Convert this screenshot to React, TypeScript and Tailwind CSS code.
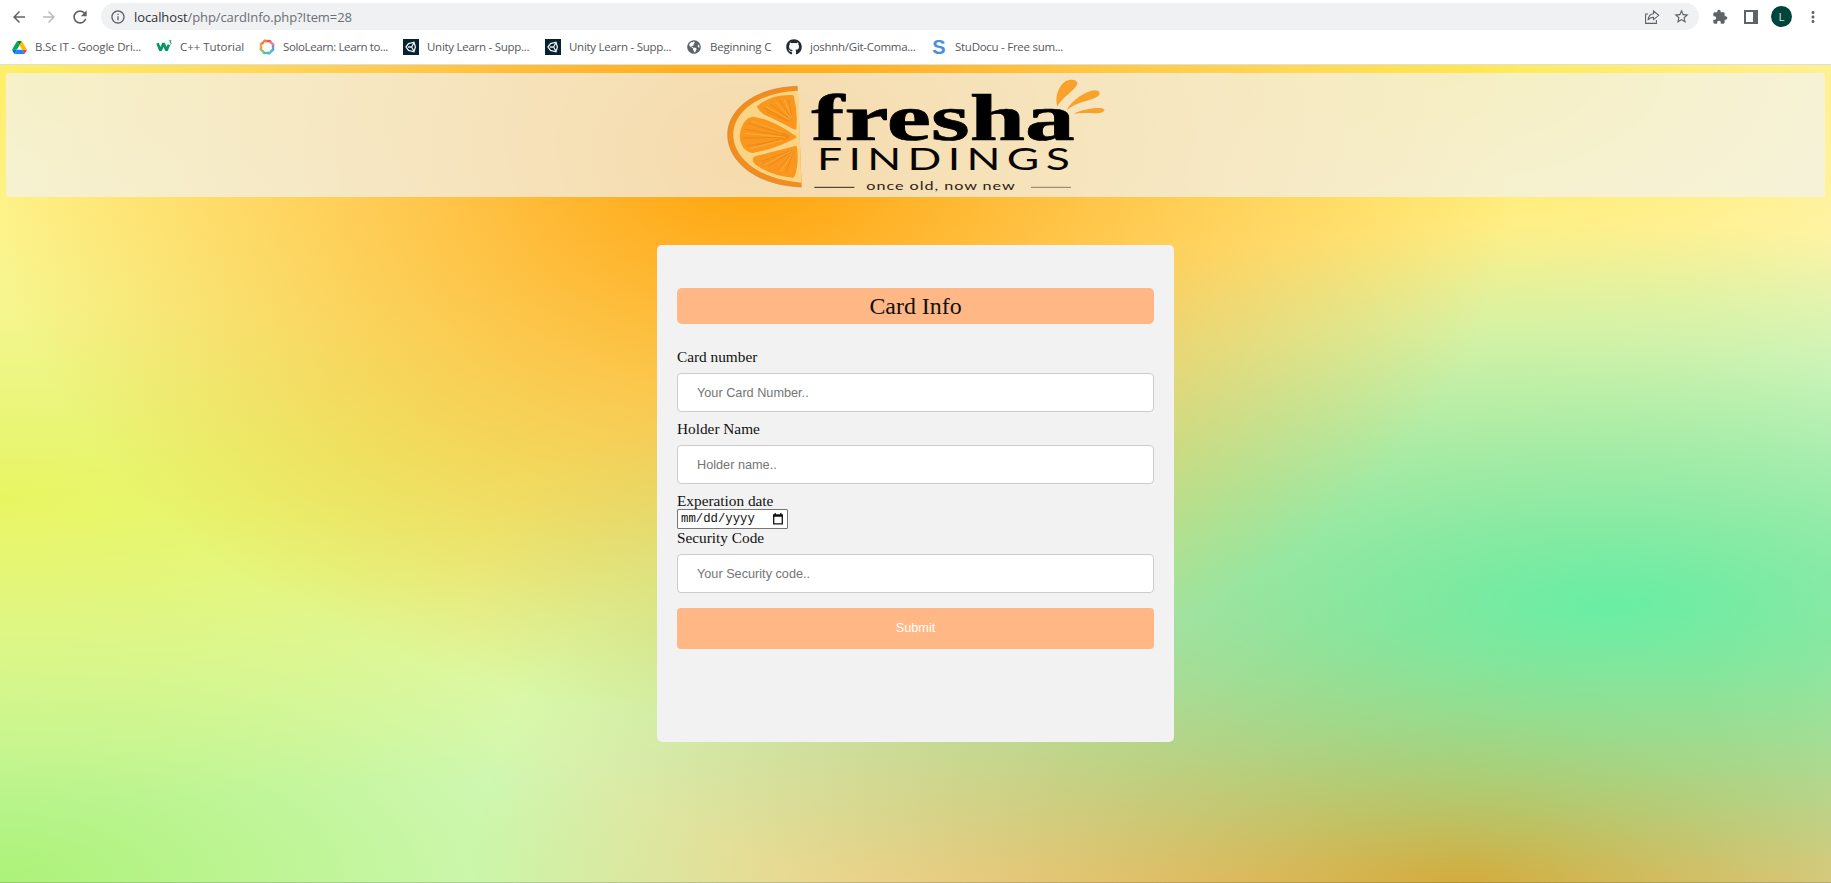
import React from "react";
import { FaGithub, FaGlobeAmericas } from "react-icons/fa";
import { MdArrowBack, MdArrowForward, MdRefresh, MdInfoOutline, MdStarBorder, MdExtension, MdMoreVert } from "react-icons/md";

const mesh = [
  "radial-gradient(42% 69% at 41% 11%, #ffa207 0px, transparent 100%)",
  "radial-gradient(at 88% 66%, #68eea4 0px, transparent 50%)",
  "radial-gradient(at 80% 0%, #ffe957 0px, transparent 50%)",
  "radial-gradient(at 0% 53%, #e8f562 0px, transparent 50%)",
  "radial-gradient(at 80% 100%, #fa9418 0px, transparent 48%)",
  "radial-gradient(at 0% 100%, #acf278 0px, transparent 50%)",
  "radial-gradient(at 0% 0%, #fff068 0px, transparent 50%)",
].join(",");

function DriveIcon() {
  return (
    <svg viewBox="0 0 87.3 78" className="h-[13px] w-[15px]">
      <path d="M6.6 66.85l3.85 6.65c.8 1.4 1.95 2.5 3.3 3.3L27.5 53H0c0 1.55.4 3.1 1.2 4.5z" fill="#0066da" />
      <path d="M43.65 25L29.9 1.2c-1.35.8-2.5 1.9-3.3 3.3L1.2 48.5A9 9 0 000 53h27.5z" fill="#00ac47" />
      <path d="M73.55 76.8c1.35-.8 2.5-1.9 3.3-3.3l1.6-2.75 7.65-13.25c.8-1.4 1.2-2.95 1.2-4.5H59.8l5.85 11.5z" fill="#ea4335" />
      <path d="M43.65 25L57.4 1.2C56.05.4 54.5 0 52.9 0H34.4c-1.6 0-3.15.45-4.5 1.2z" fill="#00832d" />
      <path d="M59.8 53H27.5L13.75 76.8c1.35.8 2.9 1.2 4.5 1.2h50.8c1.6 0 3.15-.45 4.5-1.2z" fill="#2684fc" />
      <path d="M73.4 26.5l-12.7-22c-.8-1.4-1.95-2.5-3.3-3.3L43.65 25 59.8 53h27.45c0-1.55-.4-3.1-1.2-4.5z" fill="#ffba00" />
    </svg>
  );
}

function W3Icon() {
  return (
    <svg viewBox="0 0 16 16" className="h-4 w-4" fill="none" stroke="#059862">
      <path d="M1.500 4.2l3 7.2 3-7 3 7 2.400-5.600" strokeWidth="2.7" strokeLinejoin="bevel" />
      <path d="M12.9 1.8h2.3l-1.2 1.4c1.6.1 1.7 2-.2 2.1" strokeWidth="0.9" />
    </svg>
  );
}

function SoloIcon() {
  const colors = ["#ef5350", "#f57c8a", "#5c9ce6", "#4db6e2", "#4cc3a5", "#8cc56f", "#f5a04c", "#f0803c"];
  return (
    <svg viewBox="0 0 16 16" className="h-4 w-4" fill="none" strokeWidth="2.2">
      {colors.map((c, i) => (
        <path key={c} d="M6.200 2.300l4.600-.5 1.800 2.200" stroke={c} transform={`rotate(${i * 45} 8 8)`} />
      ))}
    </svg>
  );
}

function UnityIcon() {
  return (
    <svg viewBox="0 0 16 16" className="h-4 w-4">
      <rect width="16" height="16" fill="#06222e" />
      <path d="M3 8l2.5-3.4L11 3.2l1.4 4.8L11 12.8l-5.500-1.400zM5 8h3.600M8.600 8l2.200-4M8.600 8l2.200 4" fill="none" stroke="#e8eef0" strokeWidth="1.3" />
    </svg>
  );
}

function StuIcon() {
  return <span className="font-['Liberation_Sans'] text-[20px] leading-4 font-bold text-[#4a90d9]">S</span>;
}

const bookmarks = [
  { icon: <DriveIcon />, label: "B.Sc IT - Google Dri...", box: "w-[145px]", track: "tracking-[-0.18px]" },
  { icon: <W3Icon />, label: "C++ Tutorial", box: "w-[103px]", track: "tracking-[-0.05px]" },
  { icon: <SoloIcon />, label: "SoloLearn: Learn to...", box: "w-[144px]", track: "tracking-[-0.38px]" },
  { icon: <UnityIcon />, label: "Unity Learn - Supp...", box: "w-[142px]", track: "tracking-[-0.27px]" },
  { icon: <UnityIcon />, label: "Unity Learn - Supp...", box: "w-[141px]", track: "tracking-[-0.27px]" },
  { icon: <FaGlobeAmericas size={14} color="#5f6368" />, label: "Beginning C", box: "w-[100px]", track: "tracking-[-0.22px]" },
  { icon: <FaGithub size={16} color="#24292e" />, label: "joshnh/Git-Comma...", box: "w-[145px]", track: "tracking-[-0.27px]" },
  { icon: <StuIcon />, label: "StuDocu - Free sum...", box: "w-[140px]", track: "tracking-[-0.27px]" },
];

function BrowserBar() {
  return (
    <div className="h-[65px] border-b border-[#dcdfe3] bg-white text-[#5f6368]">
      <div className="flex h-[33px] items-center pr-[9px] pl-[10px]">
        <MdArrowBack size={18} />
        <MdArrowForward size={18} className="ml-[12px] text-[#b9bbbe]" />
        <MdRefresh size={20} className="ml-[12px]" />
        <div className="ml-[11px] flex h-[27px] flex-1 items-center rounded-full bg-[#f0f1f3] pr-[9px] pl-[9px]">
          <MdInfoOutline size={16} />
          <span className="ml-[8px] font-['Open_Sans',sans-serif] text-[13px] leading-4 tracking-[-0.1px] whitespace-nowrap text-[#6b6f73]">
            <span className="text-[#303235]">localhost</span>/php/cardInfo.php?Item=28
          </span>
          <svg viewBox="0 0 16 16" className="ml-auto h-4 w-4" fill="none" stroke="currentColor" strokeWidth="1.1">
            <path d="M4 5H1.600v9.400h10.800V11" />
            <path d="M9.500 2l5.200 4.300-5.200 4.300V8.200C7 8.200 5.300 9 4 11c.3-3.500 2.200-6 5.500-6.300z" />
          </svg>
          <MdStarBorder size={17} className="ml-[13px]" />
        </div>
        <MdExtension size={16} className="ml-[13px]" />
        <svg viewBox="0 0 14 14" className="ml-[16px] h-[14px] w-[14px]">
          <path d="M1 1h12v12H1z" fill="none" stroke="currentColor" strokeWidth="2" />
          <path d="M9 1h4v12H9z" fill="currentColor" />
        </svg>
        <span className="ml-[13px] flex h-[21px] w-[21px] items-center justify-center rounded-full bg-[#00453b] font-['Open_Sans',sans-serif] text-[11.500px] text-[#d6e6e2]">L</span>
        <MdMoreVert size={18} className="ml-[12px]" />
      </div>
      <div className="flex h-[28px] items-center pl-[11px]">
        {bookmarks.map((b, i) => (
          <div key={i} className={`flex shrink-0 items-center gap-[8px] ${b.box}`}>
            <span className="flex h-4 w-4 shrink-0 items-center justify-center">{b.icon}</span>
            <span className={`font-['Open_Sans',sans-serif] text-[11.500px] leading-4 whitespace-nowrap text-[#55595d] ${b.track}`}>{b.label}</span>
          </div>
        ))}
      </div>
    </div>
  );
}

function Logo() {
  return (
    <svg viewBox="2 27 1230 372" className="h-[124px] w-[410px]">
      <path d="M262 67C130 70 50 140 52 215c2 80 90 150 222 154z" fill="#f28c1c" />
      <path d="M262 67C130 70 50 140 52 215c2 80 90 150 222 154" fill="none" stroke="#c98a48" strokeWidth="2" />
      <path d="M264 80C145 84 67 145 69 215c2 72 85 132 204 141z" fill="#f9d484" />
      <g fill="#f9971e" stroke="#f9971e" strokeWidth="8" strokeLinejoin="round">
        <path d="M246 97c-40-2-76 10-102 31 8 17 20 22 34 27l76 38c3-30 0-68-8-96z" />
        <path d="M128 162c-22 3-34 28-36 54 2 24 12 43 34 47 36-6 86-22 128-44-40-28-86-52-126-57z" />
        <path d="M256 250l-118 30c-10 3-8 10-2 17 32 25 70 37 112 40 10-20 12-58 8-87z" />
      </g>
      <g stroke="#e98614" strokeWidth="2.500" fill="none" strokeLinecap="round">
        <path d="M160 132l80 40M180 120l62 48M208 108l36 56M235 108l10 54M170 143l60 28" />
        <path d="M104 196l130 22M112 178l122 36M100 222l134-2M110 246l124-22M140 178l88 34M138 244l84-22" />
        <path d="M154 292l90-32M174 306l70-42M200 318l44-48M228 324l20-58M160 298l70-28" />
      </g>
      <g stroke="#ffb03c" strokeWidth="2.500" fill="none" strokeLinecap="round">
        <path d="M168 128l70 40M196 114l46 50M222 108l22 52M104 208l120 12M120 254l96-26M126 172l90 34M164 300l78-38M212 322l34-54" />
      </g>
      <text transform="translate(303 229) scale(1.5 1)" textLength="527" lengthAdjust="spacingAndGlyphs" fontFamily="'Liberation Serif', serif" fontWeight="700" fontSize="198" stroke="#000" strokeWidth="2">fresha</text>
      <text transform="translate(320 317) scale(1.45 1)" textLength="523" lengthAdjust="spacing" fontFamily="Lato, sans-serif" fontWeight="400" fontSize="92" fill="#080604">FINDINGS</text>
      <text x="468" y="378" textLength="448" lengthAdjust="spacingAndGlyphs" fontFamily="Lato, sans-serif" fontSize="34" letterSpacing="2" fill="#2c2018">once old, now new</text>
      <path d="M312 370h120" stroke="#33261a" strokeWidth="3" />
      <path d="M962 370h120" stroke="#8b7a66" strokeWidth="3" />
      <g fill="#f9a22b">
        <path d="M1041 128c-8-28 2-60 24-76 14-8 34-6 36 4 0 20-44 40-60 72z" />
        <path d="M1070 138c12-26 52-56 84-59 14 0 18 10 10 17-22 16-66 16-94 42z" />
        <path d="M1090 149c20-11 56-19 82-17 14 3 14 10 0 14-26 4-56-2-82 3z" />
      </g>
    </svg>
  );
}

const labelClass = "block text-[15.300px] leading-[17px] text-[#111]";
const inputClass =
  "my-2 block h-[39px] w-full rounded border border-[#ccc] bg-white px-[19px] font-['Liberation_Sans',sans-serif] text-[12.700px] text-black outline-none placeholder:text-[#757575]";

export default function App() {
  return (
    <div className="flex h-[883px] w-full flex-col overflow-hidden bg-white">
      <BrowserBar />
      <div className="flex-1 border-b border-black/15 bg-white bg-origin-border px-[6px] pt-[8px]" style={{ backgroundImage: mesh }}>
        <header className="flex h-[124px] justify-center rounded-[3px] bg-[#f2f2f2]/70">
          <Logo />
        </header>
        <main className="mx-auto mt-[48px] h-[497px] w-[517px] rounded-[5px] bg-[#f2f2f2] px-5 pt-[43px] font-['Liberation_Serif',serif]">
          <h1 className="mb-[24px] h-[36px] rounded-[5px] bg-[#ffb885] text-center text-[23.900px] leading-[36px] text-[#111]">Card Info</h1>
          <form onSubmit={(e: React.FormEvent) => e.preventDefault()}>
            <label className={labelClass}>Card number</label>
            <input className={inputClass} placeholder="Your Card Number.." />
            <label className={labelClass}>Holder Name</label>
            <input className={inputClass} placeholder="Holder name.." />
            <label className={labelClass}>Experation date</label>
            <div className="flex h-[20px] w-[111px] items-center justify-between rounded-[1px] border border-[#767676] bg-white pr-[4px] pl-[3px]">
              <span className="font-['Liberation_Mono',monospace] text-[12.300px] leading-4 text-[#111]">mm/dd/yyyy</span>
              <svg viewBox="0 0 10 12" className="h-[12px] w-[10px]">
                <path d="M.7 2.200h8.600v8.600H.7z" fill="none" stroke="#111" strokeWidth="1.300" />
                <path d="M0 1.500h10v2.300H0zM1.500 0h1.300v2H1.500zM7.200 0h1.300v2H7.200z" fill="#111" />
              </svg>
            </div>
            <label className={labelClass}>Security Code</label>
            <input className={inputClass} placeholder="Your Security code.." />
            <button className="mt-[15px] block h-[41px] w-full rounded bg-[#ffb885] font-['Liberation_Sans',sans-serif] text-[12.700px] text-white">Submit</button>
          </form>
        </main>
      </div>
    </div>
  );
}
